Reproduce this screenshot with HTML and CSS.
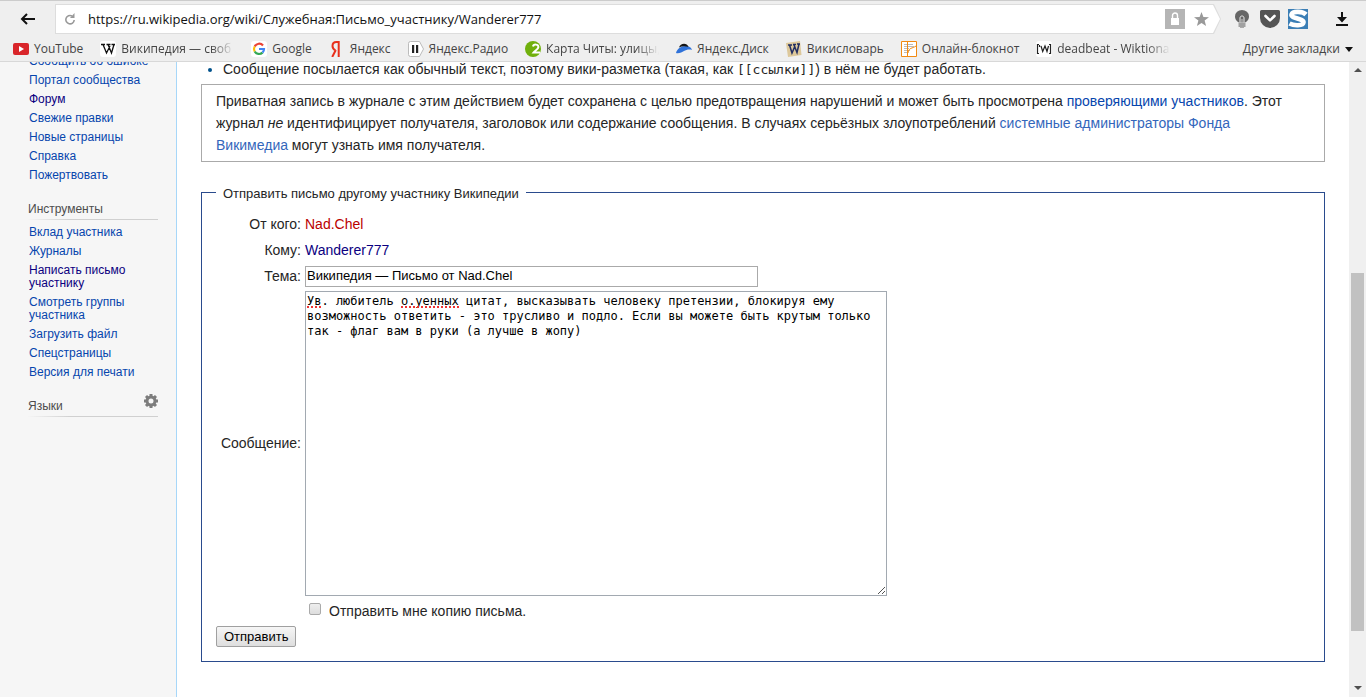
FILE: index.html
```html
<!DOCTYPE html>
<html lang="ru">
<head>
<meta charset="utf-8">
<title>Письмо участнику — Википедия</title>
<link rel="stylesheet" href="styles.css">
</head>
<body>
<header class="chrome">
  <div class="toolbar">
    <button class="icon-btn back" aria-label="Назад"><svg width="16" height="12" viewBox="0 0 16 12"><path d="M7 1 2 6l5 5M2 6h13" fill="none" stroke="#111" stroke-width="2"/></svg></button>
    <div class="address">
      <div class="address-inner">
        <button class="icon-btn" aria-label="Обновить"><svg width="12" height="14" viewBox="0 0 12 14"><path d="M8 4A4.200 4.200 0 1 0 10.200 8" fill="none" stroke="#999" stroke-width="1.600"/><path d="M6 6h4.500V1z" fill="#999"/></svg></button>
        <input class="url" type="text" aria-label="Адрес" value="https://ru.wikipedia.org/wiki/Служебная:Письмо_участнику/Wanderer777">
        <button class="icon-btn" aria-label="Защищённое соединение"><svg width="20" height="20" viewBox="0 0 20 20"><path d="M0 0h20v20H0z" fill="#b5b5b5"/><path d="M6 9h8v7H6z" fill="#fff"/><path d="M7.500 9V6.500a2.500 2.500 0 0 1 5 0V9" fill="none" stroke="#fff" stroke-width="1.400"/></svg></button>
        <button class="icon-btn star" aria-label="Добавить закладку"><svg width="15" height="14" viewBox="0 0 15 14"><path d="M7.500 0l1.900 4.900 5.600.3-4.400 3.300L12.100 14 7.500 11 2.900 14l1.500-5.500L0 5.200l5.600-.3z" fill="#999"/></svg></button>
      </div>
    </div>
    <button class="icon-btn bulb" aria-label="Подсветка"><svg width="14" height="18" viewBox="0 0 14 18"><path d="M4 12.500C2.500 11.600 0 9.800 0 6.400a7 6.400 0 0 1 14 0c0 3.400-2.500 5.200-4 6.100z" fill="#666"/><path d="M5 12.500V8c0-2.700 4-2.700 4 0v4.500" fill="none" stroke="#eee" stroke-width="1"/><path d="M7 9v3.500" stroke="#ccc"/><path d="M3.500 14h7M3.500 16h7" stroke="#888" stroke-width="1.300"/><path d="M5 17.500h4" stroke="#aaa"/></svg></button>
    <button class="icon-btn pocket" aria-label="Pocket"><svg width="20" height="18" viewBox="0 0 20 18"><path d="M1.500 0h17A1.500 1.500 0 0 1 20 1.500V8a10 10 0 0 1-20 0V1.500A1.500 1.500 0 0 1 1.500 0z" fill="#555"/><path d="M5.500 6l4.500 4.400L14.500 6" fill="none" stroke="#fff" stroke-width="2.600" stroke-linecap="round" stroke-linejoin="round"/></svg></button>
    <button class="icon-btn" aria-label="Расширение S"><svg width="20" height="20" viewBox="0 0 20 20"><path d="M0 0h20v20H0z" fill="#3b7eb5"/><path d="M18 5.500C15 2.500 5 1.500 3.500 5.500 2.300 9.500 16 9.500 15.500 13.500 15 17 6 17 1.500 14.500" fill="none" stroke="#fff" stroke-width="4.600"/></svg></button>
    <button class="icon-btn download" aria-label="Загрузки"><svg width="12" height="14" viewBox="0 0 12 14"><path d="M5 0h2v5h4L6 10.500 1 5h4z" fill="#111"/><path d="M0 12h12v2H0z" fill="#111"/></svg></button>
  </div>
  <nav class="bookmarks">
    <a class="bookmark" href="#"><svg width="16" height="16" viewBox="0 0 16 16"><rect y="2" width="16" height="12" rx="2" fill="#d9252a"/><path d="M6 5l5 3-5 3z" fill="#fff"/></svg><span>YouTube</span></a>
    <a class="bookmark" href="#"><svg width="16" height="16" viewBox="0 0 16 16"><rect width="16" height="16" rx="3" fill="#fff"/><path d="M1 3.500h4M6.500 3.500h4M11.500 3.500H15M3 3.500L6.500 12 10 5M8 3.500L11.500 12 14 3.500" fill="none" stroke="#111" stroke-width="1.300"/></svg><span class="fade">Википедия — своб</span></a>
    <a class="bookmark" href="#"><svg width="16" height="16" viewBox="0 0 16 16"><rect width="16" height="16" rx="3" fill="#fff"/><g fill="none" stroke-width="2.200"><path d="M12 4.500A5 5 0 0 0 3.700 5.500" stroke="#ea4335"/><path d="M3.700 5.500a5 5 0 0 0 0 5" stroke="#fbbc05"/><path d="M3.700 10.500a5 5 0 0 0 7.800 1.100" stroke="#34a853"/><path d="M11.500 11.600A5 5 0 0 0 13 8H8" stroke="#4285f4"/></g></svg><span>Google</span></a>
    <a class="bookmark" href="#"><svg width="16" height="16" viewBox="0 0 16 16"><path d="M9.700 16V1H7.500C4.800 1 3.500 2.600 3.500 5c0 2 1 3.300 3 4.500M6.800 9L3.200 16" fill="none" stroke="#e8301c" stroke-width="2"/></svg><span>Яндекс</span></a>
    <a class="bookmark" href="#"><svg width="16" height="16" viewBox="0 0 16 16"><path d="M2.500.5h9L15.500 8l-4 7.500h-9a2 2 0 0 1-2-2v-11a2 2 0 0 1 2-2z" fill="#fff" stroke="#bbb"/><path d="M4 4h2.200v8H4zM8 4h2.200v8H8z" fill="#222"/></svg><span>Яндекс.Радио</span></a>
    <a class="bookmark" href="#"><svg width="16" height="16" viewBox="0 0 16 16"><circle cx="8" cy="8" r="8" fill="#70b00c"/><path d="M8 5.500c.5-2.600 5.600-2.600 5.400.6C13.200 8.500 10 9.500 8.500 11.500H15" fill="none" stroke="#fff" stroke-width="2"/></svg><span class="fade">Карта Читы: улицы,</span></a>
    <a class="bookmark" href="#"><svg width="16" height="16" viewBox="0 0 16 16"><path d="M0 12C1 8 5 5 9 5s6 1 7 4c-3-1-6 0-8 1s-5 3-8 2z" fill="#2f72d9"/><path d="M3 6.500C4 2 11 1 12.500 6c-3-1-6.500-1-9.500.5z" fill="#151515"/></svg><span>Яндекс.Диск</span></a>
    <a class="bookmark" href="#"><svg width="16" height="16" viewBox="0 0 16 16"><path d="M0 2l14-2 1.500 14L2 16z" fill="#ddc89b"/><path d="M2 4h4M7 3.500h3M11 3h3M3.500 4L6 12l3-7M8 4l3 7.500L13 3" fill="none" stroke="#202d62" stroke-width="1.500"/></svg><span>Викисловарь</span></a>
    <a class="bookmark" href="#"><svg width="16" height="16" viewBox="0 0 16 16"><path d="M.5.500h15v15H.5z" fill="#fff" stroke="#f28a12"/><path d="M3 3.500h9M3 5.500h10M3 7.500h5M3 9.500h6M3 11.500h4" stroke="#bbb"/><path d="M6.500 1v14M7 12c1-6 4-4 8-7" fill="none" stroke="#f28a12"/></svg><span>Онлайн-блокнот</span></a>
    <a class="bookmark" href="#"><svg width="16" height="16" viewBox="0 0 16 16"><rect width="16" height="16" rx="3" fill="#fff"/><path d="M3 3.500H1.500v9H3M13 3.500h1.500v9H13M3.500 4v2M5 5l1.700 5.500L9 5l2 5.500L12.500 5" fill="none" stroke="#222" stroke-width="1.200"/></svg><span class="fade">deadbeat - Wiktiona</span></a>
    <button class="other">Другие закладки <svg width="8" height="5" viewBox="0 0 8 5"><path d="M0 0h8L4 5z" fill="#111"/></svg></button>
  </nav>
</header>
<div class="viewport">
  <aside class="sidebar">
    <ul class="links first">
      <li><a href="#">Сообщить об ошибке</a></li>
      <li><a href="#">Портал сообщества</a></li>
      <li><a class="visited" href="#">Форум</a></li>
      <li><a href="#">Свежие правки</a></li>
      <li><a href="#">Новые страницы</a></li>
      <li><a href="#">Справка</a></li>
      <li><a href="#">Пожертвовать</a></li>
    </ul>
    <h3 class="side-title">Инструменты</h3>
    <ul class="links">
      <li><a href="#">Вклад участника</a></li>
      <li><a href="#">Журналы</a></li>
      <li><a class="visited" href="#">Написать письмо участнику</a></li>
      <li><a href="#">Смотреть группы участника</a></li>
      <li><a href="#">Загрузить файл</a></li>
      <li><a href="#">Спецстраницы</a></li>
      <li><a href="#">Версия для печати</a></li>
    </ul>
    <h3 class="side-title">Языки
      <button class="icon-btn gear" aria-label="Настройки языка"><svg width="14" height="14" viewBox="0 0 14 14"><circle cx="7" cy="7" r="4" fill="none" stroke="#7d7d7d" stroke-width="3"/><path d="M7 0v2.500M7 11.500V14M0 7h2.500M11.500 7H14M2 2l1.800 1.800M10.200 10.200L12 12M12 2l-1.800 1.800M3.800 10.200L2 12" stroke="#7d7d7d" stroke-width="3"/></svg></button>
    </h3>
  </aside>
  <main class="content">
    <ul class="notes"><li>Сообщение посылается как обычный текст, поэтому вики-разметка (такая, как <code>[[ссылки]]</code>) в нём не будет работать.</li></ul>
    <div class="notice">Приватная запись в журнале с этим действием будет сохранена с целью предотвращения нарушений и может быть просмотрена <a href="#">проверяющими участников</a>. Этот журнал <i>не</i> идентифицирует получателя, заголовок или содержание сообщения. В случаях серьёзных злоупотреблений <a class="ext" href="#">системные администраторы Фонда Викимедиа</a> могут узнать имя получателя.</div>
    <form>
      <fieldset class="mail">
        <legend>Отправить письмо другому участнику Википедии</legend>
        <div class="fields">
          <span class="label">От кого:</span><span><a class="new" href="#">Nad.Chel</a></span>
          <span class="label">Кому:</span><span><a class="visited" href="#">Wanderer777</a></span>
          <label class="label" for="subject">Тема:</label><input class="subject" id="subject" type="text" value="Википедия — Письмо от Nad.Chel">
          <label class="label" for="message">Сообщение:</label>
          <div class="message-box">
            <textarea class="message" id="message" spellcheck="false">Ув. любитель о.уенных цитат, высказывать человеку претензии, блокируя ему возможность ответить - это трусливо и подло. Если вы можете быть крутым только так - флаг вам в руки (а лучше в жопу)</textarea>
            <i class="typo typo-a"></i><i class="typo typo-b"></i>
            <svg class="grip" width="9" height="9" viewBox="0 0 9 9"><path d="M1 8l7-7M5 8l3-3" stroke="#555"/></svg>
          </div>
          <span></span>
          <div class="copy"><input class="check" id="copy" type="checkbox"><label for="copy">Отправить мне копию письма.</label></div>
        </div>
        <button class="send" type="button">Отправить</button>
      </fieldset>
    </form>
  </main>
  <div class="scrollbar">
    <svg width="8" height="4" viewBox="0 0 8 4"><path d="M0 4h8L4 0z" fill="#505050"/></svg>
    <div class="track"><div class="thumb"></div></div>
    <svg width="8" height="4" viewBox="0 0 8 4"><path d="M0 0h8L4 4z" fill="#505050"/></svg>
  </div>
</div>
</body>
</html>
```
FILE: styles.css
```css
* { box-sizing: border-box; }
body {
  margin: 0;
  height: 100vh;
  display: flex;
  flex-direction: column;
  overflow: hidden;
  background: #fff;
  color: #252525;
  font: 14px/22px "Liberation Sans", Arial, sans-serif;
}
a { color: #0645ad; text-decoration: none; }
a.visited { color: #0b0080; }
a.new { color: #ba0000; }
a.ext { color: #3366bb; }
button, input, textarea { font: inherit; color: inherit; }
svg { display: block; flex: none; }
ul { margin: 0; padding: 0; list-style: none; }
.icon-btn { display: flex; padding: 0; border: 0; background: none; }

/* Browser frame */
.chrome {
  flex: none;
  background: #efefef;
  border-top: 1px solid #ccc;
  border-bottom: 1px solid #d8d8d8;
  font-family: "Open Sans", "Noto Sans", sans-serif;
}
.toolbar { display: flex; align-items: center; padding: 3px 18px 0 20px; }
.back { margin-right: 19px; }
.address {
  flex: 1;
  padding: 1px;
  background: #ddd;
  clip-path: polygon(0 0, calc(100% - 7px) 0, 100% 50%, calc(100% - 7px) 100%, 0 100%);
}
.address-inner {
  display: flex;
  align-items: center;
  height: 28px;
  padding: 0 11px 0 8px;
  background: #fff;
  clip-path: polygon(0 0, calc(100% - 7px) 0, 100% 50%, calc(100% - 7px) 100%, 0 100%);
}
.url {
  flex: 1;
  min-width: 0;
  margin-left: 12px;
  padding: 0;
  border: 0;
  color: #111;
  font-size: 13px;
}
.star { margin-left: 9px; }
.bulb { margin-left: 14px; }
.pocket { margin: 0 8px 0 11px; }
.download { margin-left: 28px; }
.bookmarks {
  display: flex;
  align-items: center;
  gap: 17px;
  height: 27px;
  padding: 3px 13px 0;
  font-size: 12px;
  line-height: 18px;
  white-space: nowrap;
}
.bookmark { display: flex; gap: 5px; align-items: center; color: #444; }
.fade {
  width: 113px;
  overflow: hidden;
  mask-image: linear-gradient(to right, #000 80%, transparent);
}
.other {
  display: flex;
  align-items: center;
  gap: 5px;
  margin-left: auto;
  padding: 0;
  border: 0;
  background: none;
  color: #444;
}

/* Page */
.viewport { flex: 1; min-height: 0; display: flex; overflow: hidden; }
.sidebar {
  flex: none;
  width: 177px;
  padding: 0 18px 0 29px;
  background: #f6f6f6;
  border-right: 1px solid #a7d7f9;
  font-size: 12px;
  line-height: 13px;
}
.links { margin-top: 3px; }
.links.first { margin-top: -10px; }
.links li { padding: 3px 20px 3px 0; }
.first li { white-space: nowrap; }
.side-title {
  display: flex;
  justify-content: space-between;
  height: 18px;
  margin: 17px 0 0 -1px;
  color: #4d4d4d;
  font-size: 12px;
  font-weight: normal;
  line-height: 14px;
  border-bottom: 1px solid;
  border-image: linear-gradient(to right, #f6f6f6, #d0d0d0 33%, #d0d0d0) 1;
}
.gear { align-self: flex-start; margin-top: -5px; }
.content { flex: 1; min-width: 0; padding: 0 24px; }
.notes { margin-top: -4px; }
.notes li { margin-left: 22px; list-style: disc; }
.notes li::marker { color: #00528c; }
code { font: 13px/16px "DejaVu Sans Mono", monospace; }
.notice { margin-top: 4px; padding: 5px 28px 5px 14px; border: 1px solid #aaa; }
.mail {
  min-width: 0;
  margin: 20px 0 0;
  padding: 9px 14px 14px;
  border: 1px solid #2a4b8d;
}
legend { padding: 4px 7px 0; font-size: 13px; line-height: 16px; }
.fields {
  display: grid;
  grid-template-columns: 85px 1fr;
  column-gap: 4px;
  grid-template-rows: 26px 26px 26px;
  align-items: center;
}
.label { text-align: right; }
.subject {
  width: 453px;
  height: 21px;
  padding: 1px;
  border: 1px solid #aaa;
  background: #fff;
  color: #000;
  font-size: 13px;
}
.message-box { position: relative; width: 582px; margin-top: 2px; }
.message {
  display: block;
  width: 100%;
  height: 305px;
  padding: 2px 1px;
  border: 1px solid #a2a9b1;
  background: #fff;
  color: #000;
  font: 12px/15px "DejaVu Sans Mono", monospace;
  resize: none;
}
.typo {
  position: absolute;
  top: 15px;
  height: 2px;
  background: repeating-linear-gradient(to right, #e33 0 2px, transparent 2px 4px);
}
.typo-a { left: 2px; width: 15px; }
.typo-b { left: 96px; width: 58px; }
.grip { position: absolute; right: 1px; bottom: 1px; }
.copy { display: flex; align-items: center; padding: 4px 0; }
.check {
  appearance: none;
  width: 12px;
  height: 12px;
  margin: 0 8px 4px 4px;
  border: 1px solid #aaa;
  border-radius: 2px;
  background: linear-gradient(#eee, #ddd);
}
.send {
  display: block;
  padding: 0 7px;
  border: 1px solid #a0a0a0;
  border-radius: 2px;
  background: linear-gradient(#f6f6f6, #dedede);
  color: #000;
  font-size: 13px;
  line-height: 19px;
}
.scrollbar {
  flex: none;
  width: 17px;
  display: flex;
  flex-direction: column;
  align-items: center;
  justify-content: space-between;
  padding: 6px 0 7px;
  background: #f0f0f0;
}
.track { flex: 1; display: flex; flex-direction: column; width: 13px; margin: 7px 0 6px; padding: 194px 0 49px; }
.thumb { flex: 1; background: #c1c1c1; }
```
